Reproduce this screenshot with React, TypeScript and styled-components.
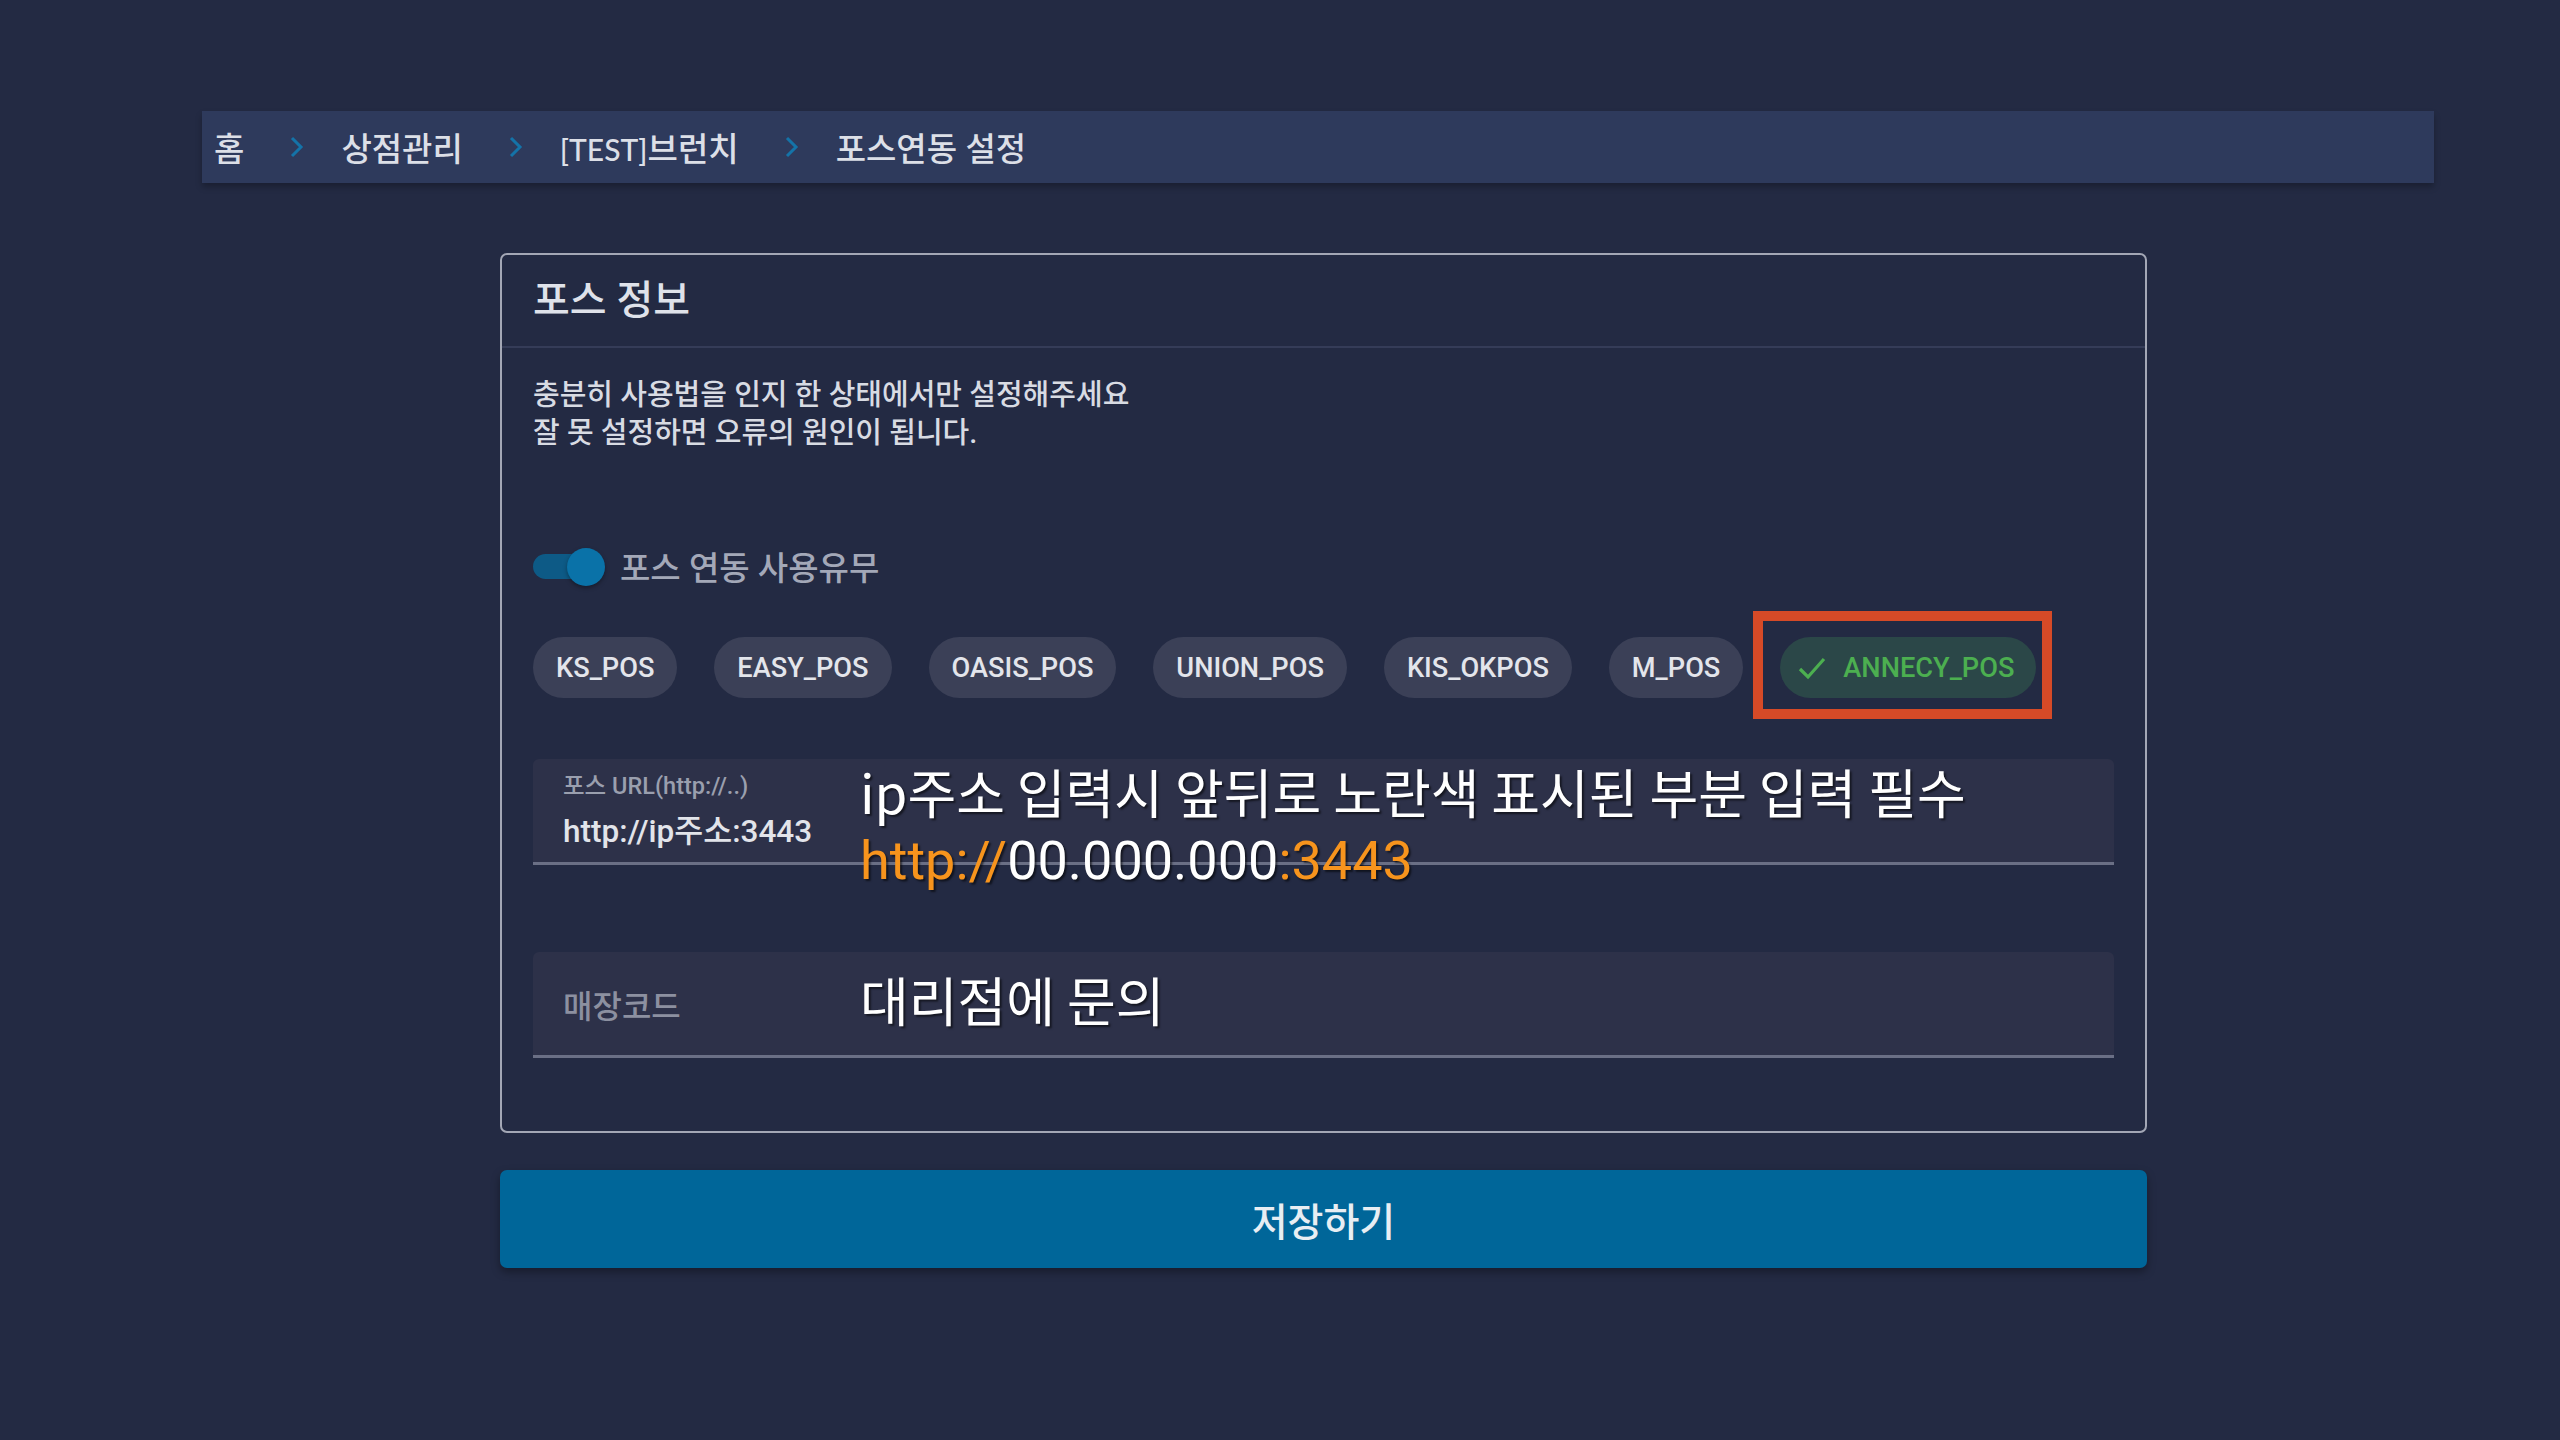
import styled, { createGlobalStyle } from 'styled-components';

const GlobalStyle = createGlobalStyle`
  html, body {
    margin: 0;
    padding: 0;
    background: #232a43;
  }
  body {
    font-family: Roboto, 'Noto Sans CJK KR', sans-serif;
    color: #dde0e8;
  }
`;

const Page = styled.div`
  min-height: 1440px;
  padding-top: 111px;
  box-sizing: border-box;
`;

const Breadcrumbs = styled.nav`
  margin: 0 126px 0 202px;
  height: 72px;
  background: #2e3a5c;
  box-shadow: 0 4px 6px rgba(0, 0, 0, 0.25);
  display: flex;
  align-items: center;
  padding-left: 12px;
  gap: 42px;
`;

const Crumb = styled.span`
  font-family: Lato, 'Noto Sans CJK KR', sans-serif;
  font-size: 33px;
  font-weight: 500;
  color: #dcdfe7;
  white-space: nowrap;
`;

const CrumbTag = styled.span`
  font-size: 30px;
`;

const Chevron = styled.svg`
  width: 16px;
  height: 22px;
  flex: none;
  margin: 0 -6px 0 3px;
`;

const Content = styled.main`
  margin: 70px 0 0 500px;
  width: 1647px;
`;

const Card = styled.section`
  border: 2px solid #a3a7b5;
  border-radius: 7px;
  height: 880px;
  box-sizing: border-box;
`;

const CardTitle = styled.h2`
  margin: 0;
  height: 93px;
  box-sizing: border-box;
  display: flex;
  align-items: center;
  padding: 0 31px 8px;
  font-size: 40px;
  font-weight: 500;
  color: #dfe2ea;
  border-bottom: 2px solid #353c58;
`;

const CardBody = styled.div`
  padding: 28px 31px 0;
`;

const Notice = styled.p`
  margin: 0;
  font-size: 29px;
  line-height: 38px;
  font-weight: 500;
  color: #d8dbe3;
`;

const ToggleRow = styled.label`
  margin-top: 95px;
  height: 40px;
  display: flex;
  align-items: center;
  gap: 15px;
`;

const Switch = styled.span`
  position: relative;
  width: 72px;
  height: 40px;
  flex: none;
  &::before {
    content: '';
    position: absolute;
    left: 0;
    top: 7px;
    width: 66px;
    height: 25px;
    border-radius: 13px;
    background: #0d5a86;
  }
  &::after {
    content: '';
    position: absolute;
    right: 0;
    top: 1px;
    width: 38px;
    height: 38px;
    border-radius: 50%;
    background: #0a72a8;
    box-shadow: 0 2px 4px rgba(0, 0, 0, 0.35);
  }
`;

const ToggleLabel = styled.span`
  font-size: 33px;
  font-weight: 500;
  color: #a3a8b8;
  margin-top: -2px;
`;

const ChipRow = styled.div`
  margin-top: 50px;
  display: flex;
  gap: 37px;
`;

const ChipWrap = styled.div`
  position: relative;
`;

const Chip = styled.span<{ selected?: boolean }>`
  height: 61px;
  border-radius: 31px;
  padding: ${(p) => (p.selected ? '0 22px 0 17px' : '0 23px')};
  display: inline-flex;
  align-items: center;
  gap: 16px;
  font-size: 27.2px;
  font-weight: 500;
  background: ${(p) => (p.selected ? '#2b4748' : '#3b4057')};
  color: ${(p) => (p.selected ? '#4caf50' : '#e3e5eb')};
  box-sizing: border-box;
`;

const Highlight = styled.div`
  position: absolute;
  left: -27px;
  right: -16px;
  top: -26px;
  bottom: -21px;
  border: 10px solid #d64a27;
  pointer-events: none;
`;

const Field = styled.div<{ top: number }>`
  position: relative;
  margin-top: ${(p) => p.top}px;
  height: 103px;
  background: #2d3149;
  border-radius: 6px 6px 0 0;
  border-bottom: 3px solid #6a6f85;
  padding: 0 30px;
  display: flex;
  flex-direction: column;
  justify-content: center;
`;

const FloatLabel = styled.span`
  font-size: 23.5px;
  font-weight: 500;
  color: #9a9fae;
  margin-top: -4px;
`;

const FieldValue = styled.span`
  font-size: 31.5px;
  font-weight: 500;
  color: #e2e4ea;
  margin-top: 4px;
`;

const Placeholder = styled.span`
  font-size: 32px;
  font-weight: 500;
  color: #8c90a0;
`;

const Note = styled.div<{ top: number }>`
  position: absolute;
  left: 327px;
  top: ${(p) => p.top}px;
  color: #ffffff;
  white-space: nowrap;
  text-shadow: 2px 2px 2px rgba(0, 0, 0, 0.55);
`;

const NoteLine = styled.div<{ latin?: boolean }>`
  font-family: ${(p) => (p.latin ? 'Roboto' : "'Noto Sans CJK KR'")}, sans-serif;
  font-size: ${(p) => (p.latin ? '54px' : '53px')};
  line-height: 65px;
  margin-top: ${(p) => (p.latin ? '4px' : '0')};
`;

const Accent = styled.span`
  color: #f7941d;
`;

const SaveButton = styled.button`
  margin-top: 37px;
  width: 100%;
  height: 98px;
  border: 0;
  border-radius: 7px;
  background: #006699;
  color: #e8eef3;
  font-family: Roboto, 'Noto Sans CJK KR', sans-serif;
  font-size: 39px;
  font-weight: 500;
  box-shadow: 0 4px 8px rgba(0, 0, 0, 0.35);
  cursor: pointer;
`;

const crumbs = [
  { tag: '', label: '홈' },
  { tag: '', label: '상점관리' },
  { tag: '[TEST]', label: '브런치' },
  { tag: '', label: '포스연동 설정' },
];
const posList = ['KS_POS', 'EASY_POS', 'OASIS_POS', 'UNION_POS', 'KIS_OKPOS', 'M_POS'];

function ChevronIcon() {
  return (
    <Chevron viewBox="0 0 16 22">
      <polyline points="3,2 12,11 3,20" fill="none" stroke="#1473a8" strokeWidth="3" />
    </Chevron>
  );
}

export default function App() {
  return (
    <Page>
      <GlobalStyle />
      <Breadcrumbs>
        {crumbs.map((c, i) => [
          i > 0 ? <ChevronIcon key={`chev-${c.label}`} /> : null,
          <Crumb key={c.label}>
            {c.tag && <CrumbTag>{c.tag}</CrumbTag>}
            {c.label}
          </Crumb>,
        ])}
      </Breadcrumbs>

      <Content>
        <Card>
          <CardTitle>포스 정보</CardTitle>
          <CardBody>
            <Notice>
              충분히 사용법을 인지 한 상태에서만 설정해주세요
              <br />
              잘 못 설정하면 오류의 원인이 됩니다.
            </Notice>

            <ToggleRow>
              <Switch />
              <ToggleLabel>포스 연동 사용유무</ToggleLabel>
            </ToggleRow>

            <ChipRow>
              {posList.map((p) => (
                <Chip key={p}>{p}</Chip>
              ))}
              <ChipWrap>
                <Chip selected>
                  <svg width="30" height="26" viewBox="0 0 30 26">
                    <polyline points="3,14 11,22 27,4" fill="none" stroke="#4caf50" strokeWidth="3.2" />
                  </svg>
                  ANNECY_POS
                </Chip>
                <Highlight />
              </ChipWrap>
            </ChipRow>

            <Field top={61}>
              <FloatLabel>포스 URL(http://..)</FloatLabel>
              <FieldValue>http://ip주소:3443</FieldValue>
              <Note top={0}>
                <NoteLine>ip주소 입력시 앞뒤로 노란색 표시된 부분 입력 필수</NoteLine>
                <NoteLine latin>
                  <Accent>http://</Accent>00.000.000<Accent>:3443</Accent>
                </NoteLine>
              </Note>
            </Field>

            <Field top={87}>
              <Placeholder>매장코드</Placeholder>
              <Note top={15}>
                <NoteLine>대리점에 문의</NoteLine>
              </Note>
            </Field>
          </CardBody>
        </Card>
        <SaveButton>저장하기</SaveButton>
      </Content>
    </Page>
  );
}
